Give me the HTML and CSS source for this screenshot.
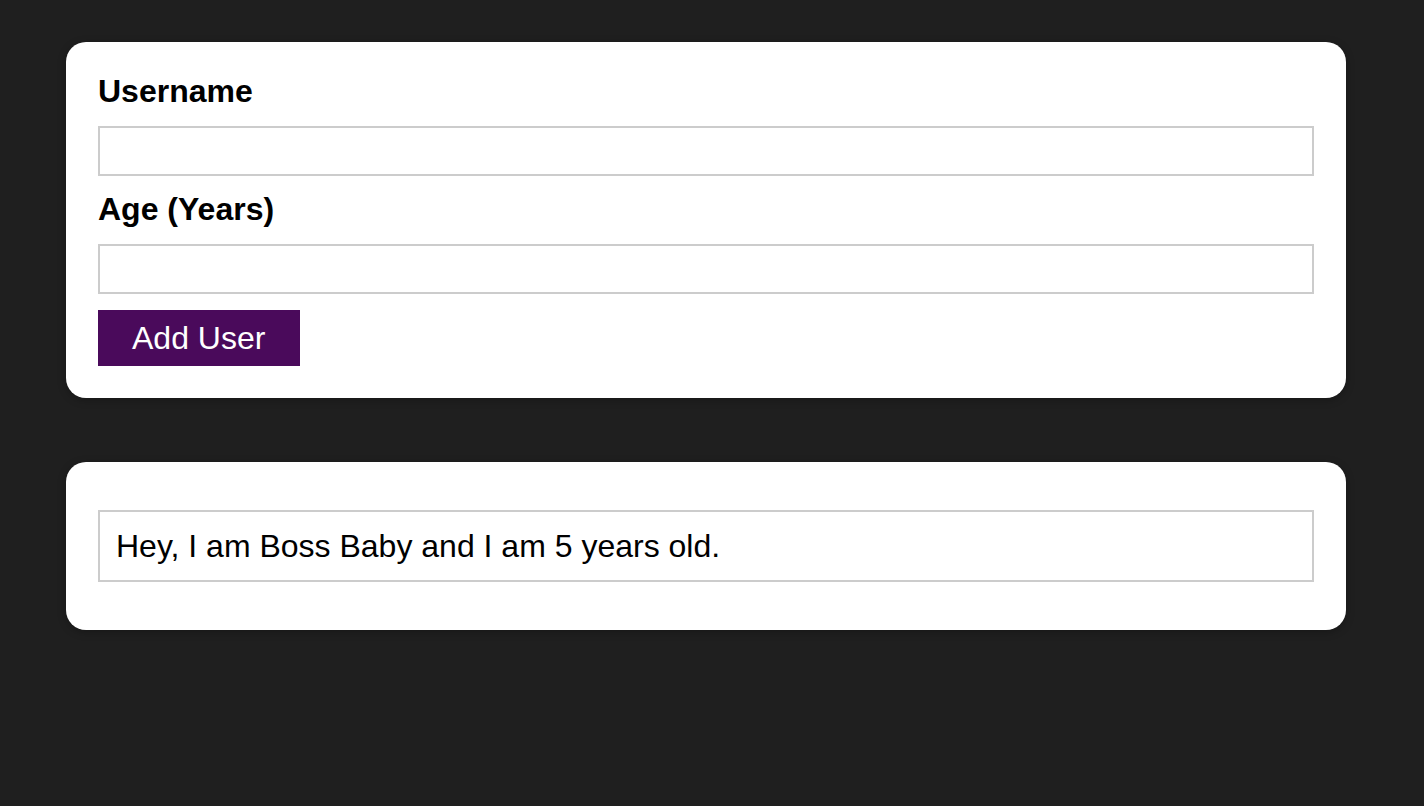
FILE: index.html
```html
<!DOCTYPE html>
<html>
<head>
<meta charset="utf-8">
<link rel="stylesheet" href="styles.css">
</head>
<body>
<div class="page">
  <div class="card form-card">
    <form class="user-form">
      <label class="field-label" for="username">Username</label>
      <input class="field-input" id="username" type="text">
      <label class="field-label" for="age">Age (Years)</label>
      <input class="field-input" id="age" type="number">
      <button class="add-btn" type="button">Add User</button>
    </form>
  </div>
  <div class="card users-card">
    <ul class="user-list">
      <li class="user-item">Hey, I am Boss Baby and I am 5 years old.</li>
    </ul>
  </div>
</div>
</body>
</html>
```

FILE: styles.css
```css
html, body {
  margin: 0;
  padding: 0;
  background: #1f1f1f;
  font-family: "Liberation Sans", Arial, Helvetica, sans-serif;
  font-size: 32px;
}

.page {
  width: 1412px;
  padding-top: 42px;
}

.card {
  background: #ffffff;
  border-radius: 20px;
  box-shadow: 0 2px 8px rgba(0, 0, 0, 0.26);
  width: 1280px;
  margin: 0 auto 64px;
  box-sizing: border-box;
}

.form-card {
  padding: 32px;
}

.user-form {
  display: flex;
  flex-direction: column;
  align-items: flex-start;
}

.field-label {
  display: block;
  font-weight: bold;
  line-height: 35px;
  margin-bottom: 17px;
  color: #000;
}

.field-input {
  display: block;
  box-sizing: border-box;
  width: 100%;
  height: 50px;
  font: inherit;
  border: 2px solid #ccc;
  padding: 0 8px;
  margin: 0 0 16px;
  background: #fff;
  outline: none;
}

.add-btn {
  font: inherit;
  line-height: 38px;
  height: 56px;
  box-sizing: border-box;
  border: 1px solid #4a0a5b;
  background: #4a0a5b;
  color: #fff;
  padding: 0 34px 0 33px;
  margin: 0;
  cursor: pointer;
}

.users-card {
  padding: 0;
}

.user-list {
  list-style: none;
  margin: 0;
  padding: 32px;
}

.user-item {
  border: 2px solid #ccc;
  margin: 16px 0;
  padding: 0 16px;
  height: 72px;
  box-sizing: border-box;
  display: flex;
  align-items: center;
  line-height: 36px;
  color: #000;
}
```
